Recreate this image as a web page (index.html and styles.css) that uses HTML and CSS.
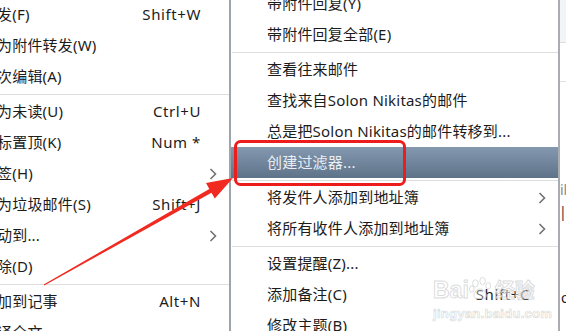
FILE: index.html
```html
<!DOCTYPE html>
<html lang="zh-CN">
<head>
<meta charset="utf-8">
<title>Context menu</title>
<link rel="stylesheet" href="styles.css">
</head>
<body>
<div class="screen">
  <div class="menu menu-left">
    <div class="item"><span class="label">发(F)</span><span class="key">Shift+W</span><span class="sub"></span></div>
    <div class="item"><span class="label">为附件转发(W)</span><span class="key"></span><span class="sub"></span></div>
    <div class="item"><span class="label">次编辑(A)</span><span class="key"></span><span class="sub"></span></div>
    <div class="sep"></div>
    <div class="item"><span class="label">为未读(U)</span><span class="key">Ctrl+U</span><span class="sub"></span></div>
    <div class="item"><span class="label">标置顶(K)</span><span class="key">Num *</span><span class="sub"></span></div>
    <div class="item"><span class="label">签(H)</span><span class="key"></span><span class="sub"><svg class="chev" viewBox="0 0 8 12"><polyline points="1.5,1 6.5,6 1.5,11"/></svg></span></div>
    <div class="item"><span class="label">为垃圾邮件(S)</span><span class="key">Shift+J</span><span class="sub"></span></div>
    <div class="item"><span class="label">动到...</span><span class="key"></span><span class="sub"><svg class="chev" viewBox="0 0 8 12"><polyline points="1.5,1 6.5,6 1.5,11"/></svg></span></div>
    <div class="item"><span class="label">除(D)</span><span class="key"></span><span class="sub"></span></div>
    <div class="sep"></div>
    <div class="item"><span class="label">加到记事</span><span class="key">Alt+N</span><span class="sub"></span></div>
    <div class="item"><span class="label">译全文</span><span class="key"></span><span class="sub"></span></div>
  </div>

  <div class="menu menu-right">
    <div class="item first"><span class="label">带附件回复(Y)</span><span class="key"></span><span class="sub"></span></div>
    <div class="item"><span class="label">带附件回复全部(E)</span><span class="key"></span><span class="sub"></span></div>
    <div class="sep"></div>
    <div class="item"><span class="label">查看往来邮件</span><span class="key"></span><span class="sub"></span></div>
    <div class="item"><span class="label">查找来自Solon Nikitas的邮件</span><span class="key"></span><span class="sub"></span></div>
    <div class="item"><span class="label">总是把Solon Nikitas的邮件转移到...</span><span class="key"></span><span class="sub"></span></div>
    <div class="item active"><span class="label">创建过滤器...</span><span class="key"></span><span class="sub"></span></div>
    <div class="sep"></div>
    <div class="item"><span class="label">将发件人添加到地址簿</span><span class="key"></span><span class="sub"><svg class="chev" viewBox="0 0 8 12"><polyline points="1.5,1 6.5,6 1.5,11"/></svg></span></div>
    <div class="item"><span class="label">将所有收件人添加到地址簿</span><span class="key"></span><span class="sub"><svg class="chev" viewBox="0 0 8 12"><polyline points="1.5,1 6.5,6 1.5,11"/></svg></span></div>
    <div class="sep"></div>
    <div class="item"><span class="label">设置提醒(Z)...</span><span class="key"></span><span class="sub"></span></div>
    <div class="item"><span class="label">添加备注(C)</span><span class="key">Shift+C</span><span class="sub"></span></div>
    <div class="item"><span class="label">修改主题(B)</span><span class="key"></span><span class="sub"></span></div>
  </div>

  <div class="backdrop">
    <div class="bd-top"></div>
    <div class="bd-mid"></div>
    <div class="bd-frag bd-il">il</div>
    <div class="bd-frag bd-bar">|</div>
    <div class="bd-frag bd-o">o</div>
  </div>

  <div class="watermark">
    <div class="wm-logo"><span class="wm-bai">Bai</span><svg class="wm-paw" viewBox="0 0 30 30"><ellipse cx="8" cy="8" rx="3.5" ry="4.5"/><ellipse cx="17" cy="5" rx="3.5" ry="4.5"/><ellipse cx="24" cy="11" rx="3" ry="4"/><ellipse cx="3.5" cy="15" rx="3" ry="4"/><path d="M7 26 C4 22 9 15 14 15 C19 15 24 22 21 26 C18 28 10 28 7 26 Z"/></svg><span class="wm-jy">经验</span></div>
    <div class="wm-url">jingyan.baidu.com</div>
  </div>

  <svg class="annot" viewBox="0 0 566 331" width="566" height="331">
    <rect x="235.5" y="141.5" width="169" height="43" rx="5" ry="5" fill="none" stroke="#ee1d1d" stroke-width="3"/>
    <polygon fill="#f02a20" points="44.3,285.5 211.5,192.7 214.8,198.6 233,178 206,183 209.3,188.9 43.7,284.5"/>
  </svg>
</div>
</body>
</html>
```

FILE: styles.css
```css
html, body {
  margin: 0;
  padding: 0;
  background: #ffffff;
}

.screen {
  position: relative;
  width: 566px;
  height: 331px;
  overflow: hidden;
  display: flex;
  font-family: "Noto Sans", "Noto Sans CJK SC", sans-serif;
  font-size: 15px;
  color: #1c1c1c;
}

.menu {
  display: flex;
  flex-direction: column;
  background: #ffffff;
  overflow: hidden;
  flex: none;
}

.menu-left {
  width: 229px;
  border-right: 2px solid #9ca5ad;
  padding-top: 0;
  margin-top: -1px;
}

.menu-right {
  width: 327px;
  border-right: 2px solid #a9adb2;
}

.item {
  display: flex;
  align-items: center;
  height: 31px;
  flex: none;
  white-space: nowrap;
  font-family: "Noto Sans", "Noto Sans CJK SC", sans-serif;
  letter-spacing: 0.2px;
}

.item.first {
  margin-top: -12px;
}

.menu-left .label {
  margin-left: -3px;
}

.menu-right .label {
  padding-left: 36px;
}

.label {
  flex: 1;
  line-height: 31px;
}

.key {
  line-height: 31px;
  text-align: right;
  letter-spacing: 0.6px;
}

.sub {
  width: 28px;
  flex: none;
  display: flex;
  align-items: center;
  padding-left: 8px;
  box-sizing: border-box;
}

.chev {
  width: 8px;
  height: 12px;
  fill: none;
  stroke: #727272;
  stroke-width: 1.6;
}

.item.active {
  background: linear-gradient(#8499b0, #5e7288);
  color: #e9eef4;
}

.sep {
  flex: none;
  height: 1px;
  margin: 2px 0 1px 0;
  background: #dedede;
}

.menu-right .sep {
  margin-left: 1px;
}

.backdrop {
  flex: 1;
  display: flex;
  flex-direction: column;
  background: #ffffff;
  font-size: 14px;
  color: #444;
}

.bd-top {
  height: 42px;
  background: #f3f4f5;
  border-bottom: 1px solid #dcdcdc;
  flex: none;
}

.bd-mid {
  height: 38px;
  border-bottom: 1px solid #e2e2e2;
  flex: none;
}

.bd-frag {
  line-height: 16px;
  flex: none;
}

.bd-il {
  margin-top: 100px;
  color: #888;
}

.bd-bar {
  margin-top: 6px;
  margin-left: -1px;
  color: #333;
}

.bd-o {
  margin-top: 70px;
  margin-left: 1px;
  color: #222;
}

.watermark {
  position: absolute;
  left: 433px;
  top: 276px;
  display: flex;
  flex-direction: column;
  align-items: flex-start;
  pointer-events: none;
}

.wm-logo {
  display: flex;
  align-items: flex-end;
  height: 26px;
}

.wm-bai, .wm-jy {
  font-family: "Liberation Sans", sans-serif;
  font-size: 23px;
  font-weight: bold;
  line-height: 24px;
  color: rgba(255, 255, 255, 0.6);
  -webkit-text-stroke: 1px rgba(190, 190, 190, 0.55);
}

.wm-jy {
  font-family: "Noto Sans CJK SC", sans-serif;
  font-size: 20px;
  margin-left: 2px;
}

.wm-paw {
  width: 24px;
  height: 26px;
  fill: rgba(255, 255, 255, 0.4);
  stroke: rgba(190, 190, 190, 0.55);
  stroke-width: 1.2;
}

.wm-url {
  font-family: "Liberation Sans", sans-serif;
  font-size: 13px;
  line-height: 16px;
  margin-top: 4px;
  font-weight: bold;
  color: rgba(255, 255, 255, 0.5);
  -webkit-text-stroke: 0.7px rgba(195, 195, 195, 0.6);
  letter-spacing: 0.3px;
}

.annot {
  position: absolute;
  left: 0;
  top: 0;
  pointer-events: none;
}
```
